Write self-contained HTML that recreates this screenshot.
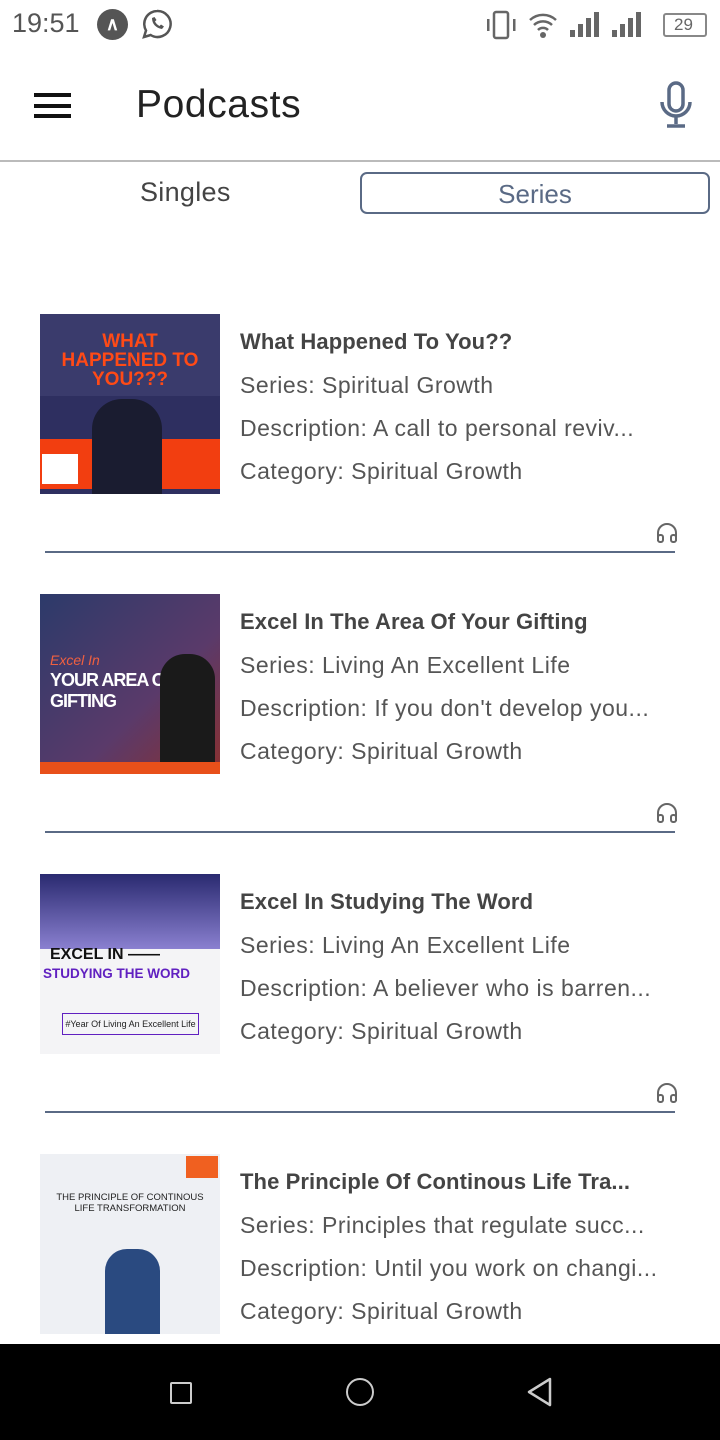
<!DOCTYPE html>
<html><head><meta charset="utf-8"><style>
*{margin:0;padding:0;box-sizing:border-box}
body{width:720px;height:1440px;background:#fff;font-family:"Liberation Sans",sans-serif;position:relative;overflow:hidden}
.abs{position:absolute}
.t{position:absolute;left:240px;font-size:23px;letter-spacing:0.5px;color:#555;white-space:nowrap}
.ti{font-weight:bold;color:#444;font-size:22px;letter-spacing:0.1px}
.div{position:absolute;left:45px;width:630px;height:2px;background:#5a6a85}
.img{position:absolute;left:40px;width:180px;height:180px;overflow:hidden}
</style></head><body>
<!-- status bar -->
<div class="abs" style="left:12px;top:8px;font-size:27px;color:#555">19:51</div>
<div class="abs" style="left:97px;top:9px;width:31px;height:31px;border-radius:50%;background:#555;color:#fff;font-size:18px;text-align:center;line-height:31px;font-weight:bold">∧</div>
<svg class="abs" style="left:141px;top:8px" width="32" height="32" viewBox="0 0 32 32"><path d="M16 3a13 13 0 0 0-11 19.5L3 29l6.7-2A13 13 0 1 0 16 3z" fill="none" stroke="#555" stroke-width="2.5"/><path d="M11 10c0 6 4 10 10 11l2-2.5-3-2-1.5 1.5c-2-1-3.5-2.5-4.5-4.5l1.5-1.5-2-3z" fill="#555"/></svg>
<svg class="abs" style="left:484px;top:10px" width="36" height="30"><rect x="10" y="2" width="14" height="26" rx="2" fill="none" stroke="#666" stroke-width="2.5"/><rect x="3" y="9" width="2.5" height="12" fill="#666"/><rect x="29" y="9" width="2.5" height="12" fill="#666"/></svg>
<svg class="abs" style="left:527px;top:10px" width="34" height="30"><path d="M3 10a19 19 0 0 1 26 0M7 15a13 13 0 0 1 18 0M11 20a7 7 0 0 1 10 0" fill="none" stroke="#666" stroke-width="2.5"/><circle cx="16" cy="25" r="3" fill="#666"/></svg>
<svg class="abs" style="left:568px;top:12px" width="84" height="26"><g fill="#666"><rect x="2" y="18" width="5" height="7"/><rect x="10" y="12" width="5" height="13"/><rect x="18" y="6" width="5" height="19"/><rect x="26" y="0" width="5" height="25"/><rect x="44" y="18" width="5" height="7"/><rect x="52" y="12" width="5" height="13"/><rect x="60" y="6" width="5" height="19"/><rect x="68" y="0" width="5" height="25"/></g></svg>
<div class="abs" style="left:663px;top:13px;width:44px;height:24px;border:2px solid #888;border-radius:3px;font-size:17px;color:#666;padding-left:9px;line-height:20px">29</div>
<!-- header -->
<div class="abs" style="left:34px;top:93px;width:37px;height:4px;background:#111"></div>
<div class="abs" style="left:34px;top:104px;width:37px;height:4px;background:#111"></div>
<div class="abs" style="left:34px;top:114px;width:37px;height:4px;background:#111"></div>
<div class="abs" style="left:136px;top:83px;font-size:39px;letter-spacing:0.6px;color:#222">Podcasts</div>
<svg class="abs" style="left:656px;top:80px" width="40" height="50" viewBox="0 0 40 50"><rect x="13" y="3" width="14" height="28" rx="7" fill="none" stroke="#5a6a85" stroke-width="3.5"/><path d="M6 22a14 14 0 0 0 28 0M20 36v8M11 46h18" fill="none" stroke="#5a6a85" stroke-width="3.5"/></svg>
<div class="abs" style="left:0;top:160px;width:720px;height:2px;background:#bbb"></div>
<div class="abs" style="left:140px;top:177px;font-size:27px;letter-spacing:0.3px;color:#444">Singles</div>
<div class="abs" style="left:360px;top:172px;width:350px;height:42px;border:2px solid #5a6a85;border-radius:7px;text-align:center;font-size:26px;color:#5a6a85;line-height:40px">Series</div>

<!-- item 1 -->
<div class="img" style="top:314px;background:#2e2f60">
 <div class="abs" style="left:0;top:0;width:180px;height:82px;background:#3a3b6c;color:#ff4a16;font-weight:bold;font-size:19px;text-align:center;line-height:19px;padding-top:18px">WHAT<br>HAPPENED TO<br>YOU???</div>
 <div class="abs" style="left:0;top:125px;width:180px;height:50px;background:#f23e10"></div>
 <div class="abs" style="left:2px;top:140px;width:36px;height:30px;background:#fff"></div>
 <div class="abs" style="left:52px;top:85px;width:70px;height:95px;background:#1a1c30;border-radius:30px 30px 0 0"></div>
</div>
<div class="t ti" style="top:329px">What Happened To You??</div>
<div class="t" style="top:372px">Series: Spiritual Growth</div>
<div class="t" style="top:415px">Description: A call to personal reviv...</div>
<div class="t" style="top:458px">Category: Spiritual Growth</div>
<svg class="abs" style="left:655px;top:521px" width="24" height="24" viewBox="0 0 24 24"><path d="M3 20v-8a9 9 0 0 1 18 0v8" fill="none" stroke="#666" stroke-width="2"/><rect x="3" y="14" width="5" height="7" rx="2" fill="none" stroke="#666" stroke-width="2"/><rect x="16" y="14" width="5" height="7" rx="2" fill="none" stroke="#666" stroke-width="2"/></svg>
<div class="div" style="top:551px"></div>

<!-- item 2 -->
<div class="img" style="top:594px;background:linear-gradient(135deg,#2c3a6a,#5a3a6a 60%,#8a3030)">
 <div class="abs" style="left:10px;top:58px;color:#f06040;font-size:14px;font-style:italic">Excel In</div>
 <div class="abs" style="left:10px;top:76px;color:#fff;font-size:18px;font-weight:bold;letter-spacing:-1px">YOUR AREA OF GIFTING</div>
 <div class="abs" style="left:120px;top:60px;width:55px;height:115px;background:#1a1a1a;border-radius:25px 25px 0 0"></div>
 <div class="abs" style="left:0;top:168px;width:180px;height:12px;background:#e8501a"></div>
</div>
<div class="t ti" style="top:609px">Excel In The Area Of Your Gifting</div>
<div class="t" style="top:652px">Series: Living An Excellent Life</div>
<div class="t" style="top:695px">Description: If you don't develop you...</div>
<div class="t" style="top:738px">Category: Spiritual Growth</div>
<svg class="abs" style="left:655px;top:801px" width="24" height="24" viewBox="0 0 24 24"><path d="M3 20v-8a9 9 0 0 1 18 0v8" fill="none" stroke="#666" stroke-width="2"/><rect x="3" y="14" width="5" height="7" rx="2" fill="none" stroke="#666" stroke-width="2"/><rect x="16" y="14" width="5" height="7" rx="2" fill="none" stroke="#666" stroke-width="2"/></svg>
<div class="div" style="top:831px"></div>

<!-- item 3 -->
<div class="img" style="top:874px;background:#f4f4f6">
 <div class="abs" style="left:0;top:0;width:180px;height:75px;background:linear-gradient(#2a2a70,#8a80d0)"></div>
 <div class="abs" style="left:10px;top:72px;font-size:16px;font-weight:bold;color:#111">EXCEL IN ——</div>
 <div class="abs" style="left:3px;top:92px;font-size:13.5px;font-weight:bold;color:#6020c0">STUDYING THE WORD</div>
 <div class="abs" style="left:22px;top:139px;width:137px;height:22px;border:1px solid #6020c0;font-size:9px;color:#222;text-align:center;line-height:20px">#Year Of Living An Excellent Life</div>
</div>
<div class="t ti" style="top:889px">Excel In Studying The Word</div>
<div class="t" style="top:932px">Series: Living An Excellent Life</div>
<div class="t" style="top:975px">Description: A believer who is barren...</div>
<div class="t" style="top:1018px">Category: Spiritual Growth</div>
<svg class="abs" style="left:655px;top:1081px" width="24" height="24" viewBox="0 0 24 24"><path d="M3 20v-8a9 9 0 0 1 18 0v8" fill="none" stroke="#666" stroke-width="2"/><rect x="3" y="14" width="5" height="7" rx="2" fill="none" stroke="#666" stroke-width="2"/><rect x="16" y="14" width="5" height="7" rx="2" fill="none" stroke="#666" stroke-width="2"/></svg>
<div class="div" style="top:1111px"></div>

<!-- item 4 -->
<div class="img" style="top:1154px;background:#eef0f4">
 <div class="abs" style="left:146px;top:2px;width:32px;height:22px;background:#f06020"></div>
 <div class="abs" style="left:0;top:38px;width:180px;text-align:center;font-size:9.5px;color:#222;line-height:11px">THE PRINCIPLE OF CONTINOUS<br>LIFE TRANSFORMATION</div>
 <div class="abs" style="left:65px;top:95px;width:55px;height:85px;background:#2a4a80;border-radius:22px 22px 0 0"></div>
</div>
<div class="t ti" style="top:1169px">The Principle Of Continous Life Tra...</div>
<div class="t" style="top:1212px">Series: Principles that regulate succ...</div>
<div class="t" style="top:1255px">Description: Until you work on changi...</div>
<div class="t" style="top:1298px">Category: Spiritual Growth</div>

<!-- nav bar -->
<div class="abs" style="left:0;top:1344px;width:720px;height:96px;background:#000"></div>
<div class="abs" style="left:170px;top:1382px;width:22px;height:22px;border:2.5px solid #ccc;border-radius:2px"></div>
<div class="abs" style="left:346px;top:1378px;width:28px;height:28px;border:2.5px solid #ccc;border-radius:50%"></div>
<svg class="abs" style="left:525px;top:1376px" width="30" height="32"><path d="M25 3L4 16l21 13z" fill="none" stroke="#ccc" stroke-width="2.5" stroke-linejoin="round"/></svg>
</body></html>
